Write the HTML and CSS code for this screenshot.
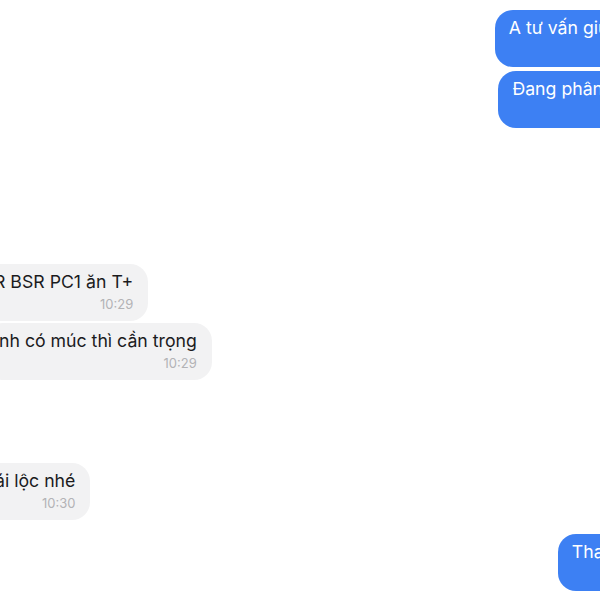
FILE: index.html
```html
<!DOCTYPE html>
<html lang="vi">
<head>
    <meta charset="UTF-8">
    <meta name="viewport" content="width=device-width, initial-scale=1.0">
    <title>Tin nhắn</title>
    <link rel="stylesheet" href="styles.css">
</head>
<body>
    <div class="chat">
        <div class="group group-top">
            <div class="row row-out">
                <div class="bubble bubble-out">
                    <div class="text">A tư vấn giúp em mã này với</div>
                    <div class="time">10:27</div>
                </div>
            </div>
            <div class="row row-out">
                <div class="bubble bubble-out">
                    <div class="text">Đang phân vân quá anh ơi ạ</div>
                    <div class="time">10:27</div>
                </div>
            </div>
        </div>

        <div class="group group-mid">
            <div class="row row-in">
                <div class="bubble bubble-in cut-r">
                    <div class="text">R BSR PC1 ăn T+</div>
                    <div class="time">10:29</div>
                </div>
            </div>
            <div class="row row-in">
                <div class="bubble bubble-in cut-n">
                    <div class="text">nh có múc thì cần trọng</div>
                    <div class="time">10:29</div>
                </div>
            </div>
        </div>

        <div class="group group-low">
            <div class="row row-in">
                <div class="bubble bubble-in cut-a">
                    <div class="text">ái lộc nhé</div>
                    <div class="time">10:30</div>
                </div>
            </div>
        </div>

        <div class="group group-end">
            <div class="row row-out">
                <div class="bubble bubble-out">
                    <div class="text">Thanks anh nhiều ạ!!</div>
                    <div class="time">10:31</div>
                </div>
            </div>
        </div>
    </div>
</body>
</html>
```

FILE: styles.css
```css
body {
    margin: 0;
    background-color: #fff;
    font-family: Inter, "Noto Sans", sans-serif;
    overflow: hidden;
    height: 600px;
}

.chat {
    width: 760px;
    padding-top: 10px;
    display: flex;
    flex-direction: column;
}

.group {
    display: flex;
    flex-direction: column;
    gap: 4px;
}

.group-mid {
    margin-top: 136px;
    gap: 2px;
}

.group-low {
    margin-top: 83px;
}

.group-end {
    margin-top: 14px;
}

.row {
    display: flex;
}

.row-out {
    justify-content: flex-end;
}

.row-in {
    justify-content: flex-start;
}

.bubble {
    border-radius: 18px;
    padding: 6px 15px 6px 14px;
    height: 57px;
    box-sizing: border-box;
}

.bubble .text {
    font-size: 17.7px;
    line-height: 24px;
    white-space: nowrap;
}

.bubble .time {
    font-size: 13px;
    line-height: 16px;
    text-align: right;
    margin-top: 2px;
}

.bubble-out {
    background-color: #3d80f3;
    color: #fff;
}

.bubble-out .time {
    color: rgba(255, 255, 255, 0.7);
}

.bubble-in {
    background-color: #f2f2f3;
    color: #1b1b1d;
}

.bubble-in .time {
    color: #b3b3b6;
}

.cut-r {
    margin-left: -20px;
}

.cut-n {
    margin-left: -15px;
}

.cut-a {
    margin-left: -19px;
}
```
